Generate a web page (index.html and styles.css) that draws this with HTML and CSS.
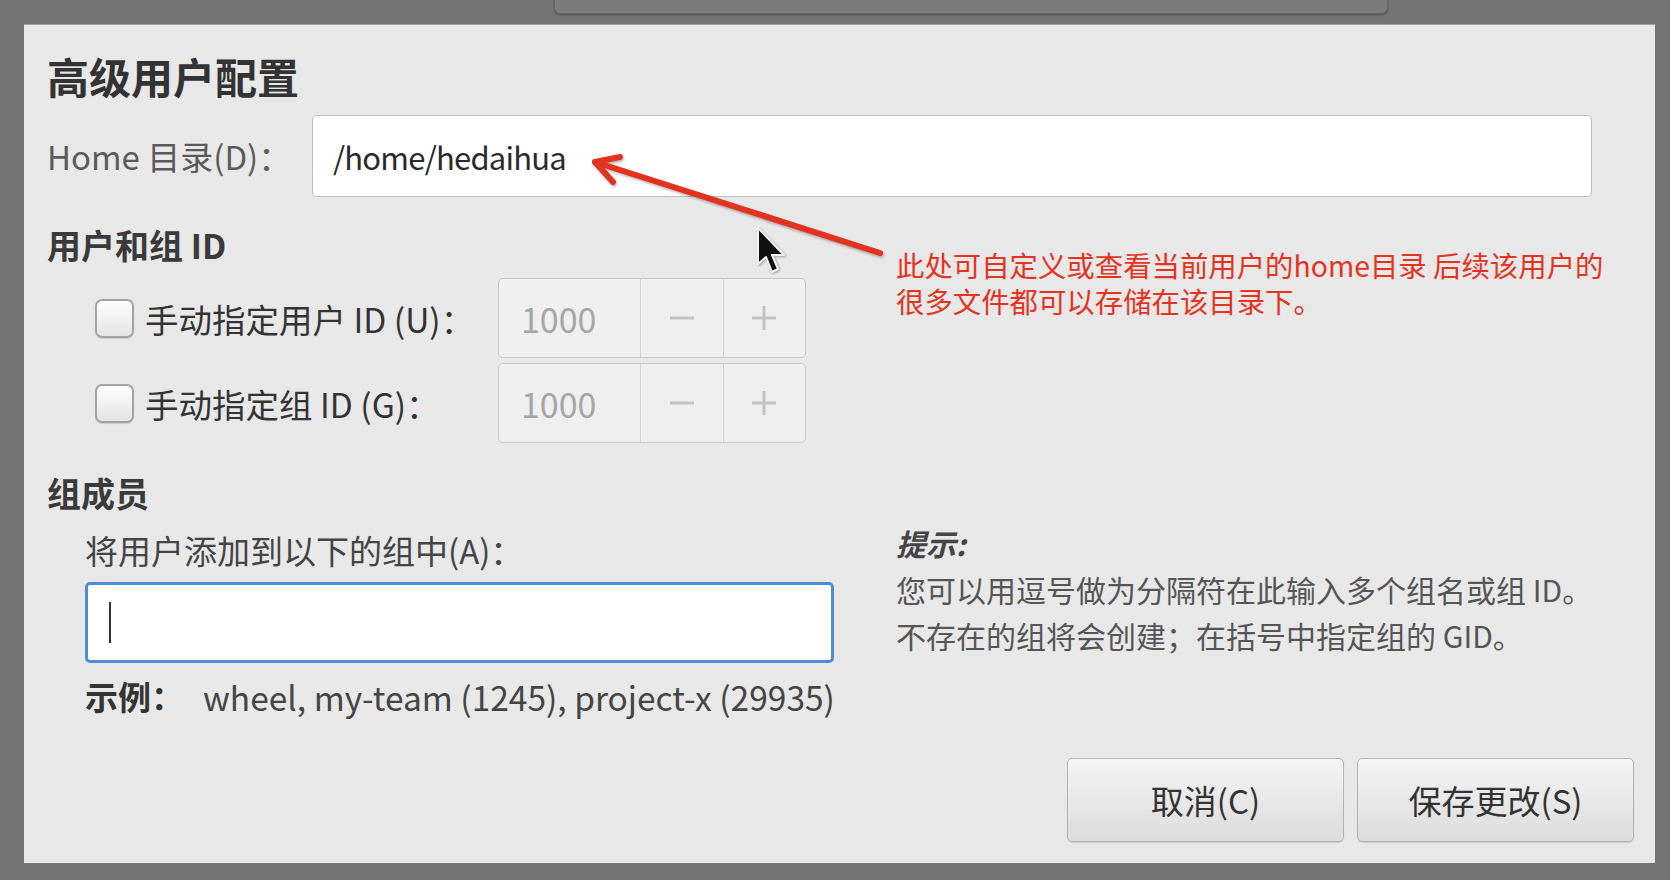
FILE: index.html
```html
<!DOCTYPE html>
<html lang="zh-CN">
<head>
    <meta charset="UTF-8">
    <title>高级用户配置</title>
    <link rel="stylesheet" href="styles.css">
</head>
<body>
    <!-- window behind the dialog -->
    <div class="back-window"></div>

    <div class="dialog">
        <h1 class="title">高级用户配置</h1>

        <div class="home-row">
            <label class="home-label">Home 目录(D)：</label>
            <div class="entry home-entry">/home/hedaihua</div>
        </div>

        <h2 class="section">用户和组 ID</h2>
        <div class="id-rows">
            <div class="id-row">
                <span class="check"></span>
                <span class="id-label">手动指定用户 ID (U)：</span>
                <div class="spin">
                    <span class="spin-value">1000</span>
                    <span class="spin-btn">
                        <svg width="26" height="26" viewBox="0 0 26 26"><path d="M1 13h24" stroke="#c3c3c3" stroke-width="3"/></svg>
                    </span>
                    <span class="spin-btn">
                        <svg width="26" height="26" viewBox="0 0 26 26"><path d="M1 13h24M13 1v24" stroke="#c3c3c3" stroke-width="3"/></svg>
                    </span>
                </div>
            </div>
            <div class="id-row">
                <span class="check"></span>
                <span class="id-label">手动指定组 ID (G)：</span>
                <div class="spin">
                    <span class="spin-value">1000</span>
                    <span class="spin-btn">
                        <svg width="26" height="26" viewBox="0 0 26 26"><path d="M1 13h24" stroke="#c3c3c3" stroke-width="3"/></svg>
                    </span>
                    <span class="spin-btn">
                        <svg width="26" height="26" viewBox="0 0 26 26"><path d="M1 13h24M13 1v24" stroke="#c3c3c3" stroke-width="3"/></svg>
                    </span>
                </div>
            </div>
        </div>

        <h2 class="section section-groups">组成员</h2>
        <div class="groups">
            <div class="groups-left">
                <div class="groups-label">将用户添加到以下的组中(A)：</div>
                <div class="entry group-entry"><span class="caret"></span></div>
                <div class="example">
                    <span class="example-key">示例：</span>
                    <span class="example-value">wheel, my-team (1245), project-x (29935)</span>
                </div>
            </div>
            <div class="hint">
                <div class="hint-title">提示:</div>
                <p>您可以用逗号做为分隔符在此输入多个组名或组 ID。</p>
                <p>不存在的组将会创建；在括号中指定组的 GID。</p>
            </div>
        </div>

        <div class="actions">
            <button class="btn">取消(C)</button>
            <button class="btn">保存更改(S)</button>
        </div>
    </div>

    <!-- annotation -->
    <p class="note">此处可自定义或查看当前用户的home目录 后续该用户的<br>很多文件都可以存储在该目录下。</p>
    <svg class="arrow" width="305" height="115" viewBox="0 0 305 115">
        <g fill="none" stroke="#e3321f" stroke-width="6" stroke-linecap="round" stroke-linejoin="round">
            <path d="M10 12L295 103"/>
            <path d="M35 7L10 12L28 32"/>
        </g>
    </svg>

    <svg class="pointer" width="34" height="52" viewBox="0 0 34 52">
        <path d="M3 3V39L11 32L17 47L23 44L17 30H29Z" fill="#111" stroke="#f4f4f4" stroke-width="2" stroke-linejoin="round"/>
    </svg>
</body>
</html>
```

FILE: styles.css
```css
* {
    box-sizing: border-box;
    margin: 0;
    padding: 0;
}

body {
    font-family: "Noto Sans CJK SC", sans-serif;
    background-color: #747474;
    width: 1670px;
    height: 880px;
    overflow: hidden;
    position: relative;
    color: #333;
}

.back-window {
    position: absolute;
    left: 554px;
    top: -10px;
    width: 834px;
    height: 24px;
    background: #7b7b7b;
    border: 1px solid #666;
    border-radius: 6px;
    box-shadow: 0 1px 2px rgba(0, 0, 0, 0.3);
}

.dialog {
    margin: 25px 0 0 24px;
    width: 1631px;
    height: 838px;
    background: #e8e8e8;
    box-shadow: 0 -1px 0 #a2a2a2;
    padding: 30px 21px 21px 23px;
    display: flex;
    flex-direction: column;
}

.title {
    font-size: 42px;
    line-height: 42px;
    font-weight: 700;
    color: #333;
}

.home-row {
    margin-top: 18px;
    height: 82px;
    display: flex;
    align-items: center;
}

.home-label {
    width: 265px;
    font-size: 33px;
    color: #5a5a5a;
}

.entry {
    background: #fff;
    border: 1px solid #bdbdbd;
    border-radius: 5px;
    display: flex;
    align-items: center;
}

.home-entry {
    width: 1280px;
    height: 82px;
    padding-left: 20px;
    font-size: 31px;
    letter-spacing: -0.8px;
    color: #2a2a2a;
}

.section {
    font-size: 34px;
    line-height: 34px;
    font-weight: 700;
    color: #3a3a3a;
    margin-top: 31px;
}

.id-rows {
    margin-top: 16px;
    display: flex;
    flex-direction: column;
    gap: 5px;
}

.id-row {
    display: grid;
    grid-template-columns: 50px 353px 308px;
    align-items: center;
    height: 80px;
    padding-left: 48px;
}

.check {
    width: 39px;
    height: 39px;
    border: 2px solid #a3a3a3;
    border-radius: 7px;
    background: linear-gradient(#fdfdfd, #e4e4e4);
    box-shadow: 0 1px 1px rgba(0, 0, 0, 0.12);
}

.id-label {
    font-size: 33.5px;
    color: #333;
}

.spin {
    display: flex;
    height: 80px;
    background: #efefef;
    border: 1px solid #c6c6c6;
    border-radius: 5px;
}

.spin-value {
    width: 142px;
    padding-left: 22px;
    display: flex;
    align-items: center;
    font-size: 34px;
    color: #a6a6a6;
}

.spin-btn {
    width: 83px;
    border-left: 1px solid #d2d2d2;
    display: flex;
    align-items: center;
    justify-content: center;
}

.section-groups {
    margin-top: 33px;
}

.groups {
    display: flex;
}

.groups-left {
    margin-left: 38px;
    width: 749px;
}

.groups-label {
    margin-top: 24px;
    font-size: 33px;
    line-height: 33px;
    color: #444;
}

.group-entry {
    margin-top: 15px;
    height: 81px;
    border: 3px solid #4e8ed9;
    padding-left: 21px;
}

.caret {
    width: 2px;
    height: 41px;
    background: #333;
}

.example {
    margin-top: 17px;
    font-size: 33.5px;
    line-height: 33px;
    color: #444;
    display: flex;
    white-space: nowrap;
}

.example-key {
    flex: none;
    width: 118px;
    font-size: 33px;
    font-weight: 700;
    color: #333;
}

.example-value {
    flex: none;
}

.hint {
    margin-left: 62px;
    margin-top: 10px;
    font-size: 30px;
    line-height: 46px;
    color: #555;
}

.hint-title {
    font-weight: 700;
    font-style: italic;
    color: #444;
}

.actions {
    margin-top: auto;
    display: flex;
    justify-content: flex-end;
    gap: 13px;
}

.btn {
    width: 277px;
    height: 84px;
    font-family: "Noto Sans CJK SC", sans-serif;
    font-size: 33px;
    color: #333;
    background: linear-gradient(#f4f4f4, #dcdcdc);
    border: 1px solid #b3b3b3;
    border-radius: 5px;
    box-shadow: 0 1px 1px rgba(0, 0, 0, 0.12);
}

/* annotation on top of the screenshot */
.note {
    position: absolute;
    left: 896px;
    top: 247px;
    font-size: 28.4px;
    line-height: 36px;
    color: #e5331f;
}

.arrow {
    position: absolute;
    left: 585px;
    top: 150px;
    filter: drop-shadow(1px 2px 1px rgba(0, 0, 0, 0.25));
}

.pointer {
    position: absolute;
    left: 755px;
    top: 225px;
    filter: drop-shadow(1px 1px 1px rgba(0, 0, 0, 0.3));
}
```
